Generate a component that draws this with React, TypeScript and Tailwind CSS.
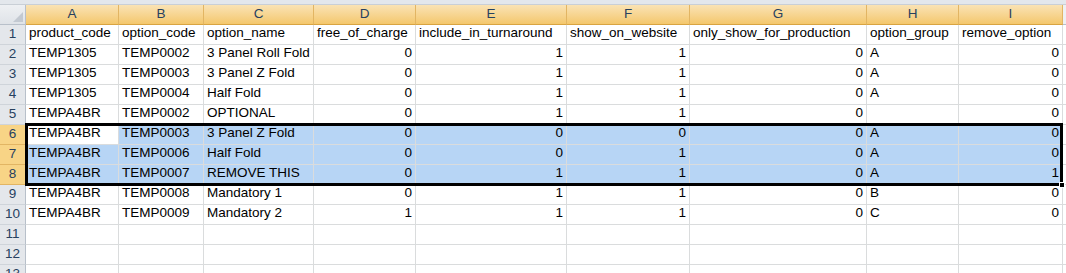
const COLS = ['A', 'B', 'C', 'D', 'E', 'F', 'G', 'H', 'I']

type Cell = string | number

const ROWS: Cell[][] = [
  ['product_code', 'option_code', 'option_name', 'free_of_charge', 'include_in_turnaround', 'show_on_website', 'only_show_for_production', 'option_group', 'remove_option'],
  ['TEMP1305', 'TEMP0002', '3 Panel Roll Fold', 0, 1, 1, 0, 'A', 0],
  ['TEMP1305', 'TEMP0003', '3 Panel Z Fold', 0, 1, 1, 0, 'A', 0],
  ['TEMP1305', 'TEMP0004', 'Half Fold', 0, 1, 1, 0, 'A', 0],
  ['TEMPA4BR', 'TEMP0002', 'OPTIONAL', 0, 1, 1, 0, '', 0],
  ['TEMPA4BR', 'TEMP0003', '3 Panel Z Fold', 0, 0, 0, 0, 'A', 0],
  ['TEMPA4BR', 'TEMP0006', 'Half Fold', 0, 0, 1, 0, 'A', 0],
  ['TEMPA4BR', 'TEMP0007', 'REMOVE THIS', 0, 1, 1, 0, 'A', 1],
  ['TEMPA4BR', 'TEMP0008', 'Mandatory 1', 0, 1, 1, 0, 'B', 0],
  ['TEMPA4BR', 'TEMP0009', 'Mandatory 2', 1, 1, 1, 0, 'C', 0],
  ['', '', '', '', '', '', '', '', ''],
  ['', '', '', '', '', '', '', '', ''],
  ['', '', '', '', '', '', '', '', ''],
]

// rows 6..8 are selected (A6:I8), A6 is the active cell
const isSelectedRow = (n: number) => n >= 6 && n <= 8

function CornerCell() {
  return (
    <div className="relative h-5 border-r border-b border-[#b8c0ca] bg-gradient-to-b from-[#eef0f3] to-[#dfe3e8]">
      <svg className="absolute right-[2px] bottom-[2px]" width="10" height="10" viewBox="0 0 10 10">
        <polygon points="10,0 10,10 0,10" fill="#c3c9d1" />
      </svg>
    </div>
  )
}

function DataCell({ value, row, col }: { value: Cell; row: number; col: number }) {
  const selected = isSelectedRow(row) && !(row === 6 && col === 0)
  const numeric = typeof value === 'number'
  return (
    <div
      className={`h-5 border-r border-b border-[#dadcdd] flex items-end pb-px px-[3px] overflow-hidden whitespace-nowrap ${
        numeric ? 'justify-end' : 'justify-start'
      } ${selected ? 'bg-[#b7d5f5]' : 'bg-white'}`}
    >
      {String(value)}
    </div>
  )
}

export default function App() {
  return (
    <div
      className="relative w-[1066px] h-[273px] overflow-hidden bg-white text-[13.5px] text-black"
      style={{ fontFamily: '"Liberation Sans", Arial, sans-serif' }}
    >
      <div className="h-[5px] bg-[#e3e7ec] border-b border-[#c9cfd6]" />
      <div className="grid grid-cols-[26px_93px_85px_110px_102px_151px_123px_177px_92px_104px_1fr]">
        <CornerCell />
        {COLS.map((c) => (
          <div
            key={c}
            className="h-5 flex items-center justify-center border-r border-b border-r-[#e2b563] border-b-[#d9a441] bg-gradient-to-b from-[#fae3b4] to-[#f4c76c] text-[#27415f]"
          >
            {c}
          </div>
        ))}
        <div className="h-5 border-b border-[#b8c0ca] bg-[#eef0f3]" />

        {ROWS.map((row, i) => {
          const n = i + 1
          const sel = isSelectedRow(n)
          return [
            <div
              key={`h${n}`}
              className={`h-5 flex items-center justify-center border-r border-b text-[#27415f] ${
                sel
                  ? 'bg-[#f8d486] border-r-[#d9a441] border-b-[#e2b563]'
                  : 'bg-[#e4e7eb] border-r-[#b8c0ca] border-b-[#cfd4da]'
              }`}
            >
              {n}
            </div>,
            ...row.map((v, j) => <DataCell key={`c${n}-${j}`} value={v} row={n} col={j} />),
            <div key={`j${n}`} className="h-5 border-b border-[#dadcdd] bg-white" />,
          ]
        })}
      </div>

      {/* selection outline and fill handle */}
      <div className="absolute left-[25px] top-[123px] w-[1038px] h-[63px] border-[3px] border-black pointer-events-none" />
      <div className="absolute left-[1059px] top-[182px] w-[6px] h-[6px] bg-black border border-white" />
    </div>
  )
}
